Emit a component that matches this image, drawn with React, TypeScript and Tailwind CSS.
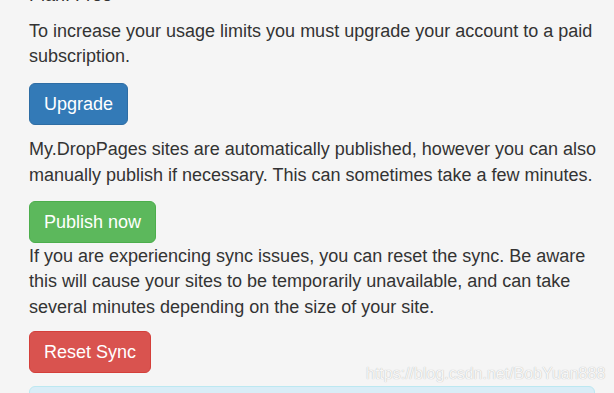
import React from "react";

export default function App() {
  return (
    <div className="relative h-[393px] overflow-hidden bg-[#f5f5f5] font-['Liberation_Sans',Arial,sans-serif] text-[#333]">
      <div className="ml-[29px] mt-[-17px] flex w-[566px] flex-col items-start text-[18px] leading-[25.714px]">
        <p className="mb-[10px]">Plan: Free</p>
        <p className="whitespace-nowrap">
          To increase your usage limits you must upgrade your account to a paid
          <br />
          subscription.
        </p>
        <button className="mt-[13px] rounded-[6px] border border-[#2e6da4] bg-[#337ab7] px-[14px] py-[8px] text-[18px] leading-[24px] text-white">
          Upgrade
        </button>
        <p className="mt-[12px] whitespace-nowrap">
          My.DropPages sites are automatically published, however you can also
          <br />
          manually publish if necessary. This can sometimes take a few minutes.
        </p>
        <button className="mt-[12px] rounded-[6px] border border-[#4cae4c] bg-[#5cb85c] px-[14px] py-[8px] text-[18px] leading-[24px] text-white">
          Publish now
        </button>
        <p className="mt-[1px] whitespace-nowrap">
          If you are experiencing sync issues, you can reset the sync. Be aware
          <br />
          this will cause your sites to be temporarily unavailable, and can take
          <br />
          several minutes depending on the size of your site.
        </p>
        <button className="mt-[10px] rounded-[6px] border border-[#d43f3a] bg-[#d9534f] px-[14px] py-[8px] text-[18px] leading-[24px] text-white">
          Reset Sync
        </button>
        <div className="mt-[13px] h-[60px] w-full rounded-[6px] border border-[#bce8f1] bg-[#d9edf7]" />
      </div>
      <div className="absolute left-[366px] top-[364px] whitespace-nowrap text-[16px] leading-[20px] text-[#f7f7f7] [text-shadow:0_0_1px_rgba(0,0,0,0.3)]">
        https://blog.csdn.net/BobYuan888
      </div>
    </div>
  );
}
